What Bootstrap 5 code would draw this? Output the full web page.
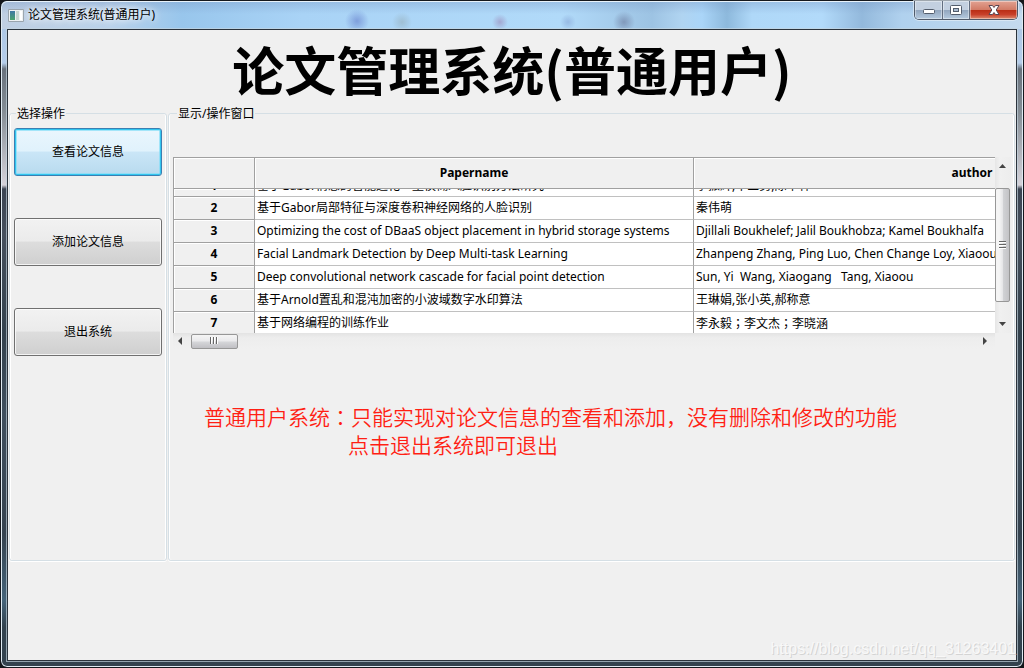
<!DOCTYPE html>
<html lang="zh-CN">
<head>
<meta charset="utf-8">
<meta name="viewport" content="width=device-width, initial-scale=1">
<title>论文管理系统(普通用户)</title>
<link href="https://cdn.jsdelivr.net/npm/bootstrap@5.3.0/dist/css/bootstrap.min.css" rel="stylesheet">
<style>
body { background: #14161a; color: #000; font: 12px/18px "Noto Sans", "Noto Sans CJK SC", sans-serif; }
/* window frame */
.win {
  border: 1px solid #15181d; border-radius: 7px; padding: 0 6px 6px;
  box-shadow: inset 0 0 0 1px #dfeaf2;
  background: linear-gradient(#a9c4e2 0, #b5cdea 62px, #69727d 68px, #848d95 110px, #d5d3da 184px, #3b4553 188px, #46505d 35%, #33424e 50%, #3f4f5e 62%, #354350 80%, #46647a 90%, #33424e 94%);
}
.titlebar {
  height: 28px; margin: 0 -5px; padding-left: 6px;
  border-top: 1px solid #e8f2fa; border-radius: 6px 6px 0 0;
  background:
    radial-gradient(circle at 355px 19px, #7f9fdc 0, transparent 12px),
    radial-gradient(circle at 498px 20px, #a3a9d2 0, transparent 8px),
    radial-gradient(circle at 622px 20px, #8199bb 0, transparent 11px),
    radial-gradient(circle at 400px 20px, #9fbfd4 0, transparent 10px),
    radial-gradient(circle at 566px 20px, #98bbe4 0, transparent 8px),
    linear-gradient(180deg, #7c9cc866 0, transparent 12px),
    linear-gradient(90deg, #c0cfe2 0, #b9d2ea 110px, #98c6ec 180px, #a9d3f6 300px, #b1daf9 560px, #9dc3e3 650px, #b0d4f1 680px, #aad5f8 700px, #8db9dc 725px, #afd8f8 750px, #b2dafa 820px, #93b9dc 860px, #b0d1ee 900px, #c4daee 100%);
}
.app-title { text-shadow: 0 0 6px #fff, 0 0 8px #fff; }
.wbtns { height: 19px; margin-right: 4px; margin-top: -1px; border: 1px solid #505b6b; border-top: 0; border-radius: 0 0 5px 5px; box-shadow: 0 0 0 1px #e4eff8aa; overflow: hidden; }
.wbtn { width: 28px; padding: 0; border: 0; border-right: 1px solid #626e80; background: linear-gradient(#c3d0e0 0 48%, #91a5bd 50%, #b5cadf); box-shadow: inset 0 0 0 1px #ffffff66; display: flex; align-items: center; justify-content: center; }
.wbtn-max { width: 27px; }
.wbtn-close { width: 47px; border-right: 0; background: linear-gradient(#e2a292 0, #d27b66 48%, #b92d14 50%, #c8402a 75%, #dd8c70); }
.client { background: #f0f0f0; border: 1px solid #2b333c; box-shadow: 0 0 0 1px #c5d5e0aa; }
.page-title { font: 700 52px/74px "Noto Sans CJK SC", sans-serif; height: 74px; padding-top: 2px; }
/* etched group boxes */
.groups { padding: 0 1px; gap: 1px; }
.group { border: 1px solid #d5dfe5; border-radius: 3px; box-shadow: inset 1px 0 #fff, inset -1px 0 #fff, 0 1px #fff; }
.group > legend { float: none; width: auto; font-size: 12px; line-height: 20px; height: 18px; margin: 0 0 0 2px; padding: 0 1px; background: #f0f0f0; }
.ops { width: 158px; padding: 6px 4px 0; }
.ops-list { row-gap: 42px; }
.view { padding: 35px 3px 0 4px; min-width: 0; }
.op-btn {
  height: 48px; border: 1px solid #707070; border-radius: 3px; color: #000; padding: 0; font-size: 12px; line-height: 18px;
  background: linear-gradient(#f2f2f2 0, #ebebeb 48%, #dddddd 50%, #cfcfcf 100%); box-shadow: inset 0 0 0 1px #fcfcfccc;
}
.op-btn.active, .op-btn.active:active { color: #000; border-color: #3c7fb1; background: linear-gradient(#eaf6fd 0, #e0f2fc 48%, #cae6f7 50%, #b8daee 100%); box-shadow: inset 0 0 0 1px #31c5ef, inset 0 0 0 2px #7fdcf8aa; }
/* table */
.grid-view { display: grid; grid-template-columns: minmax(0, 1fr) 16px; }
.clip { overflow: hidden; height: 176px; }
.papers { width: 1078px; table-layout: fixed; border-collapse: separate; border-spacing: 0; background: #fff; margin: 0; }
.papers th, .papers td { height: 23px; padding: 0 2px; border-right: 1px solid #a0a0a0; border-bottom: 1px solid #c0c0c0; white-space: pre; overflow: hidden; line-height: 18px; }
.papers th { background: #f0f0f0; font-weight: 700; text-align: center; border-bottom-color: #a0a0a0; box-shadow: inset 1px 1px #fff; }
.papers thead th { height: 32px; border-top: 1px solid #a0a0a0; }
.papers tr > :first-child { border-left: 1px solid #a0a0a0; }
.papers .cut th, .papers .cut td { height: 8px; line-height: 7px; }
.cut-text { height: 7px; overflow: hidden; display: flex; align-items: flex-end; line-height: 20px; }
.c-no { width: 82px; } .c-name { width: 439px; }
/* full-width punctuation centred in its cell */
.punct { font-family: "Noto Sans CJK TC", sans-serif; }
/* scroll bars */
.sbar { background: linear-gradient(90deg, #e6e6e6, #f0f0f0 30%, #ededed); }
.sbar-h { height: 16px; background: linear-gradient(#e3e3e3, #ededed 30%, #f0f0f0); padding: 0 4px; }
.thumb-v { margin: 15px 1px 0 0; height: 114px; border: 1px solid #979797; border-radius: 2px; background: linear-gradient(90deg, #f5f5f5 0 25%, #e6e6e8 50%, #d1d2d5 55%, #c3c3c6); }
.thumb-h { width: 47px; height: 15px; margin-left: 8px; border: 1px solid #979797; border-radius: 2px; background: linear-gradient(#f5f5f5, #e9e9eb 48%, #d6d7da 52%, #c0c0c4); }
.notice { color: #ff1f14; font-size: 21px; line-height: 28px; font-family: "Noto Sans CJK SC", sans-serif; font-weight: 350; margin: 53px 0 0 31px; }
.notice-next { padding-left: 144px; }
.foot { height: 99px; padding-bottom: 1px; }
.stamp { font: 16px/20px "Liberation Sans", sans-serif; color: #f8f8f8; text-shadow: 1px 1px #d4d4d4; }
</style>
</head>
<body>
<div class="win d-flex flex-column min-vh-100">
  <header class="titlebar d-flex align-items-start">
    <div class="d-flex align-items-center gap-1 pt-1 flex-grow-1">
      <svg width="16" height="16" viewBox="0 0 16 16" aria-hidden="true"><defs><linearGradient id="ic" x2="0" y2="1"><stop stop-color="#3f78a5"/><stop offset="1" stop-color="#4aa36c"/></linearGradient></defs><path fill="#eef1f3" stroke="#9aa4ad" d="M.5 2.500h15v12H.5z"/><path fill="url(#ic)" d="M2 4h5v9H2z"/><path fill="#c7d7d1" d="M8 4h3v9H8z"/><path fill="#fff" d="M12 4h2v9h-2z"/></svg>
      <span class="app-title">论文管理系统(普通用户)</span>
    </div>
    <div class="wbtns d-flex">
      <button class="wbtn" type="button" aria-label="最小化"><svg width="14" height="14" viewBox="0 0 14 14"><rect x="1.500" y="6.500" width="11" height="4" rx="1" fill="#fff" stroke="#535d6c"/></svg></button>
      <button class="wbtn wbtn-max" type="button" aria-label="最大化"><svg width="14" height="14" viewBox="0 0 14 14"><rect x="1.500" y="2.500" width="11" height="9" rx="1" fill="#fff" stroke="#535d6c"/><rect x="4.500" y="5.500" width="5" height="3" fill="#a9bbd0" stroke="#535d6c"/></svg></button>
      <button class="wbtn wbtn-close" type="button" aria-label="关闭"><svg width="14" height="14" viewBox="0 0 14 14"><path d="M2 2.500h3.500L7 4.500l1.500-2H12L9.200 7l2.800 4.500H8.500L7 9.500l-1.500 2H2L4.800 7z" fill="#fff" stroke="#5b4550"/></svg></button>
    </div>
  </header>

  <main class="client d-flex flex-column flex-grow-1">
    <h1 class="page-title text-center m-0">论文管理系统(普通用户)</h1>
    <div class="groups d-flex flex-grow-1">
      <fieldset class="group ops flex-shrink-0">
        <legend>选择操作</legend>
        <div class="d-grid ops-list">
          <button class="btn op-btn active" type="button">查看论文信息</button>
          <button class="btn op-btn" type="button">添加论文信息</button>
          <button class="btn op-btn" type="button">退出系统</button>
        </div>
      </fieldset>
      <fieldset class="group view flex-grow-1">
        <legend class="ms-1">显示/操作窗口</legend>
        <div class="grid-view">
          <div class="clip">
            <table class="papers">
              <colgroup><col class="c-no"><col class="c-name"><col></colgroup>
              <thead><tr><th></th><th scope="col">Papername</th><th scope="col">author</th></tr></thead>
              <tbody>
                <tr class="cut"><th scope="row"><div class="cut-text justify-content-center">1</div></th><td><div class="cut-text">基于Gabor情感的智能进化一型模糊人脸识别方法研究</div></td><td><div class="cut-text">李振辉,牛三勇,陈华林</div></td></tr>
                <tr><th scope="row">2</th><td>基于Gabor局部特征与深度卷积神经网络的人脸识别</td><td>秦伟萌</td></tr>
                <tr><th scope="row">3</th><td>Optimizing the cost of DBaaS object placement in hybrid storage systems</td><td>Djillali Boukhelef; Jalil Boukhobza; Kamel Boukhalfa</td></tr>
                <tr><th scope="row">4</th><td>Facial Landmark Detection by Deep Multi-task Learning</td><td>Zhanpeng Zhang, Ping Luo, Chen Change Loy, Xiaoou Tang</td></tr>
                <tr><th scope="row">5</th><td>Deep convolutional network cascade for facial point detection</td><td>Sun, Yi  Wang, Xiaogang   Tang, Xiaoou</td></tr>
                <tr><th scope="row">6</th><td>基于Arnold置乱和混沌加密的小波域数字水印算法</td><td>王琳娟,张小英,郝称意</td></tr>
                <tr><th scope="row">7</th><td>基于网络编程的训练作业</td><td>李永毅<span class="punct" lang="zh-TW">；</span>李文杰<span class="punct" lang="zh-TW">；</span>李晓涵</td></tr>
              </tbody>
            </table>
          </div>
          <div class="sbar d-flex flex-column">
            <svg width="15" height="16" viewBox="0 0 15 16"><path d="M4 11l3.500-4 3.500 4z" fill="#444"/></svg>
            <div class="thumb-v d-flex align-items-center justify-content-center"><svg width="8" height="8" viewBox="0 0 8 8"><path d="M0 .5h7M0 3.500h7M0 6.500h7" stroke="#666"/><path d="M0 1.500h7M0 4.500h7M0 7.500h7" stroke="#fff"/></svg></div>
            <svg class="mt-auto" width="15" height="16" viewBox="0 0 15 16"><path d="M4 5l3.500 4L11 5z" fill="#444"/></svg>
          </div>
          <div class="sbar-h d-flex align-items-center">
            <svg width="6" height="8" viewBox="0 0 6 8"><path d="M5 0L1 4l4 4z" fill="#444"/></svg>
            <div class="thumb-h d-flex align-items-center justify-content-center"><svg width="9" height="8" viewBox="0 0 9 8"><path d="M.5 0v7M3.500 0v7M6.500 0v7" stroke="#666"/><path d="M1.500 0v7M4.500 0v7M7.500 0v7" stroke="#fff"/></svg></div>
            <svg class="ms-auto" width="8" height="8" viewBox="0 0 8 8"><path d="M0 0l4 4-4 4z" fill="#444"/></svg>
          </div>
        </div>
        <div class="notice"><div>普通用户系统<span class="punct" lang="zh-TW">：</span>只能实现对论文信息的查看和添加，没有删除和修改的功能</div><div class="notice-next">点击退出系统即可退出</div></div>
      </fieldset>
    </div>
    <footer class="foot d-flex align-items-end justify-content-end"><span class="stamp">https://blog.csdn.net/qq_31263401</span></footer>
  </main>
</div>
<script src="https://cdn.jsdelivr.net/npm/bootstrap@5.3.0/dist/js/bootstrap.bundle.min.js"></script>
</body>
</html>
